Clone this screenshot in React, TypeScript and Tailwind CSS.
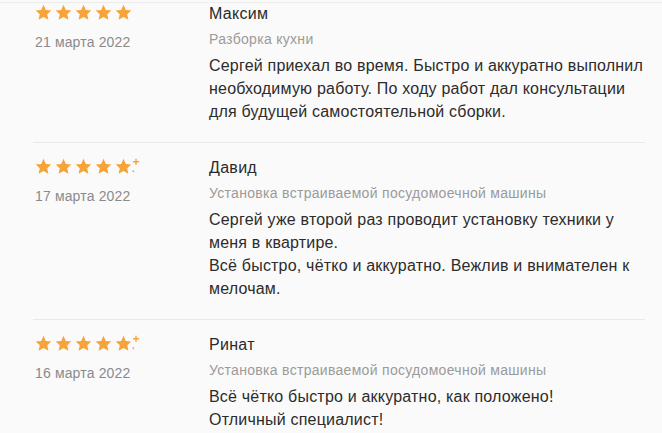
const STAR = "M8.5 0.8l2.3 5.1 5.5 0.6-4.1 3.7 1.2 5.5-4.9-2.8-4.9 2.8 1.2-5.5L0.7 6.5l5.5-0.6z";

function Star() {
  return (
    <svg width="17" height="17" viewBox="0 0 17 17">
      <path d={STAR} fill="#f5a33a" />
    </svg>
  );
}

function HalfStar() {
  return (
    <svg width="26" height="17" viewBox="0 0 26 17">
      <defs>
        <clipPath id="cut">
          <polygon points="0,0 11,0 16,7 13,17 0,17" />
        </clipPath>
      </defs>
      <path d={STAR} fill="#f5a33a" clipPath="url(#cut)" />
      <path d="M21 1.2v5M18.5 3.7h5" stroke="#f5a33a" strokeWidth="1.4" strokeLinecap="round" />
      <circle cx="18.3" cy="13.3" r="1" fill="#c9b48f" />
    </svg>
  );
}

type Review = {
  name: string;
  date: string;
  category: string;
  lines: string[];
  half: boolean;
};

const reviews: Review[] = [
  {
    name: "Максим",
    date: "21 марта 2022",
    category: "Разборка кухни",
    lines: [
      "Сергей приехал во время. Быстро и аккуратно выполнил",
      "необходимую работу. По ходу работ дал консультации",
      "для будущей самостоятельной сборки.",
    ],
    half: false,
  },
  {
    name: "Давид",
    date: "17 марта 2022",
    category: "Установка встраиваемой посудомоечной машины",
    lines: [
      "Сергей уже второй раз проводит установку техники у",
      "меня в квартире.",
      "Всё быстро, чётко и аккуратно. Вежлив и внимателен к",
      "мелочам.",
    ],
    half: true,
  },
  {
    name: "Ринат",
    date: "16 марта 2022",
    category: "Установка встраиваемой посудомоечной машины",
    lines: ["Всё чётко быстро и аккуратно, как положено!", "Отличный специалист!"],
    half: true,
  },
];

export default function App() {
  return (
    <div
      className="w-[662px] h-[433px] overflow-hidden bg-[#fafafa]"
      style={{ fontFamily: "'Liberation Sans', Arial, sans-serif" }}
    >
      <div className="h-[3px] border-b border-[#ededed]" />
      {reviews.map((r, i) => (
        <div
          key={r.name}
          className={
            i === 0
              ? "ml-[33px] mr-[17px] flex pt-[1px] pb-[19px]"
              : "ml-[33px] mr-[17px] flex pt-[15px] pb-[19px] border-t border-[#e9e9e9]"
          }
        >
          <div className="w-[176px] shrink-0 pl-[2px]">
            <div className="flex gap-[3px] h-[17px]">
              <Star />
              <Star />
              <Star />
              <Star />
              {r.half ? <HalfStar /> : <Star />}
            </div>
            <div className="mt-[12px] text-[14px] leading-[19px] tracking-[0.15px] text-[#8a8a8e]">{r.date}</div>
          </div>
          <div className="flex-1">
            <div className="text-[16px] leading-[20px] tracking-[0.3px] text-[#2a2a2a]">{r.name}</div>
            <div className="mt-[6px] text-[14px] leading-[18px] tracking-[0.3px] text-[#9b9b9b]">{r.category}</div>
            <div className="mt-[6px] text-[16px] leading-[23px] tracking-[0.2px] text-[#2c2c2c]">
              {r.lines.map((l) => (
                <div key={l} className="whitespace-nowrap">{l}</div>
              ))}
            </div>
          </div>
        </div>
      ))}
    </div>
  );
}
